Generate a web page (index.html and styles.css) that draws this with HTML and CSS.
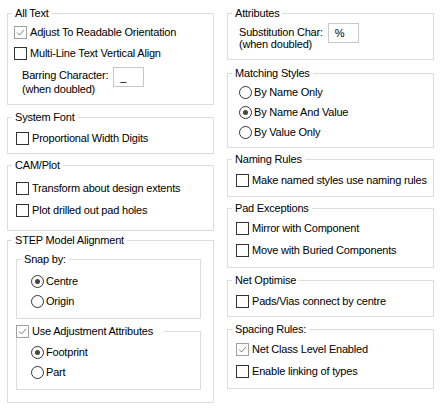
FILE: index.html
```html
<!DOCTYPE html>
<html>
<head>
<meta charset="utf-8">
<link rel="stylesheet" href="styles.css">
</head>
<body>
<div class="page">
  <div class="col">
    <fieldset class="grp g-alltext">
      <legend>All Text</legend>
      <div class="body b-alltext">
        <label class="chk tight"><span class="box checked"><svg viewBox="0 0 11 11" width="11" height="11"><polyline points="2,5.5 4.5,8 9,3" /></svg></span>Adjust To Readable Orientation</label>
        <label class="chk tight"><span class="box"></span>Multi-Line Text Vertical Align</label>
        <div class="field f-barring">
          <div class="flabel l14">Barring Character:<br>(when doubled)</div>
          <div class="input">_</div>
        </div>
      </div>
    </fieldset>
    <fieldset class="grp g-sysfont">
      <legend>System Font</legend>
      <div class="body b-p8 pt3">
        <label class="chk"><span class="box"></span>Proportional Width Digits</label>
      </div>
    </fieldset>
    <fieldset class="grp g-cam">
      <legend>CAM/Plot</legend>
      <div class="body b-p8 pt5">
        <label class="chk"><span class="box"></span>Transform about design extents</label>
        <label class="chk"><span class="box"></span>Plot drilled out pad holes</label>
      </div>
    </fieldset>
    <fieldset class="grp g-step">
      <legend>STEP Model Alignment</legend>
      <div class="body b-step">
        <fieldset class="grp sub g-snap">
          <legend>Snap by:</legend>
          <div class="body b-sub pt5">
            <label class="rad"><span class="circ on"></span>Centre</label>
            <label class="rad"><span class="circ"></span>Origin</label>
          </div>
        </fieldset>
        <fieldset class="grp sub g-adj">
          <legend class="chk-legend"><label class="chk inline"><span class="box checked"><svg viewBox="0 0 11 11" width="11" height="11"><polyline points="2,5.5 4.5,8 9,3" /></svg></span>Use Adjustment Attributes</label></legend>
          <div class="body b-sub pt4">
            <label class="rad"><span class="circ on"></span>Footprint</label>
            <label class="rad"><span class="circ"></span>Part</label>
          </div>
        </fieldset>
      </div>
    </fieldset>
  </div>

  <div class="col">
    <fieldset class="grp g-attr">
      <legend>Attributes</legend>
      <div class="body b-attr">
        <div class="field">
          <div class="flabel l12">Substitution Char:<br>(when doubled)</div>
          <div class="input">%</div>
        </div>
      </div>
    </fieldset>
    <fieldset class="grp g-match">
      <legend>Matching Styles</legend>
      <div class="body b-p11 pt2">
        <label class="rad"><span class="circ"></span>By Name Only</label>
        <label class="rad"><span class="circ on"></span>By Name And Value</label>
        <label class="rad"><span class="circ"></span>By Value Only</label>
      </div>
    </fieldset>
    <fieldset class="grp g-naming">
      <legend>Naming Rules</legend>
      <div class="body b-p8 pt3">
        <label class="chk"><span class="box"></span>Make named styles use naming rules</label>
      </div>
    </fieldset>
    <fieldset class="grp g-pad">
      <legend>Pad Exceptions</legend>
      <div class="body b-p8 pt2">
        <label class="chk"><span class="box"></span>Mirror with Component</label>
        <label class="chk"><span class="box"></span>Move with Buried Components</label>
      </div>
    </fieldset>
    <fieldset class="grp g-net">
      <legend>Net Optimise</legend>
      <div class="body b-p8 pt3">
        <label class="chk"><span class="box"></span>Pads/Vias connect by centre</label>
      </div>
    </fieldset>
    <fieldset class="grp g-spacing">
      <legend>Spacing Rules:</legend>
      <div class="body b-p8 pt2">
        <label class="chk"><span class="box checked"><svg viewBox="0 0 11 11" width="11" height="11"><polyline points="2,5.5 4.5,8 9,3" /></svg></span>Net Class Level Enabled</label>
        <label class="chk"><span class="box"></span>Enable linking of types</label>
      </div>
    </fieldset>
  </div>
</div>
</body>
</html>
```

FILE: styles.css
```css
html, body {
  margin: 0;
  padding: 0;
  background: #ffffff;
}

body {
  font-family: "Liberation Sans", Arial, sans-serif;
  font-size: 11px;
  line-height: 13px;
  letter-spacing: -0.2px;
  color: #000000;
}

.page {
  display: flex;
  gap: 13px;
  padding: 7px 0 0 7px;
}

.col {
  display: flex;
  flex-direction: column;
  width: 207px;
}

.grp {
  box-sizing: border-box;
  margin: 0;
  padding: 0;
  border: 1px solid #dcdcdc;
  min-width: 0;
}

.grp > legend {
  margin-left: 4px;
  padding: 0 3px;
  line-height: 13px;
}

.body {
  display: flex;
  flex-direction: column;
}

.b-p8 { padding-left: 8px; }
.b-p11 { padding-left: 11px; }
.pt2 { padding-top: 2px; }
.pt3 { padding-top: 3px; }
.pt4 { padding-top: 4px; }
.pt5 { padding-top: 5px; }

/* group sizes */
.g-alltext { height: 98px; }
.g-sysfont { height: 43px; margin-top: 6px; }
.g-cam { height: 72px; margin-top: 5px; }
.g-step { height: 169px; margin-top: 3px; }
.g-attr { height: 53px; }
.g-match { height: 81px; margin-top: 7px; }
.g-naming { height: 44px; margin-top: 5px; }
.g-pad { height: 66px; margin-top: 5px; }
.g-net { height: 43px; margin-top: 6px; }
.g-spacing { height: 66px; margin-top: 6px; }

.b-alltext { padding: 2px 0 0 6px; }
.b-step { padding: 0 0 0 8px; }
.b-sub { padding-left: 14px; }
.b-attr { padding: 3px 0 0 11px; }

.sub { width: 185px; }
.g-snap { height: 66px; margin-top: 6px; }
.g-adj { height: 65px; margin-top: 6px; }

.grp > legend.chk-legend {
  margin-left: -1px;
  padding: 0 11px 0 0;
}

/* checkbox rows */
.chk, .rad {
  display: flex;
  align-items: center;
  white-space: nowrap;
}

.chk { height: 22px; }
.chk.tight { height: 21px; }
.chk.inline { height: 13px; }
.rad { height: 20px; }

.box {
  box-sizing: border-box;
  width: 13px;
  height: 13px;
  border: 1px solid #333333;
  background: #ffffff;
  margin-right: 3px;
  flex: none;
  display: flex;
  align-items: center;
  justify-content: center;
}

.box.checked {
  border-color: #a0a0a0;
}

.box svg polyline {
  fill: none;
  stroke: #808080;
  stroke-width: 1;
}

.circ {
  box-sizing: border-box;
  width: 13px;
  height: 13px;
  border: 1px solid #333333;
  border-radius: 50%;
  background: #ffffff;
  margin-right: 2px;
  flex: none;
  display: flex;
  align-items: center;
  justify-content: center;
}

.circ.on::after {
  content: "";
  width: 5px;
  height: 5px;
  border-radius: 50%;
  background: #444444;
}

/* label + text input fields */
.field {
  display: flex;
  align-items: flex-start;
  gap: 5px;
}

.f-barring {
  margin: 3px 0 0 8px;
}

.flabel { margin-top: 3px; white-space: nowrap; }
.f-barring .flabel { margin-top: 1px; }
.l14 { line-height: 14px; }
.l12 { line-height: 12px; }

.input {
  box-sizing: border-box;
  width: 31px;
  height: 20px;
  border: 1px solid #c8c8c8;
  padding: 2px 0 0 6px;
  line-height: 14px;
}
```
